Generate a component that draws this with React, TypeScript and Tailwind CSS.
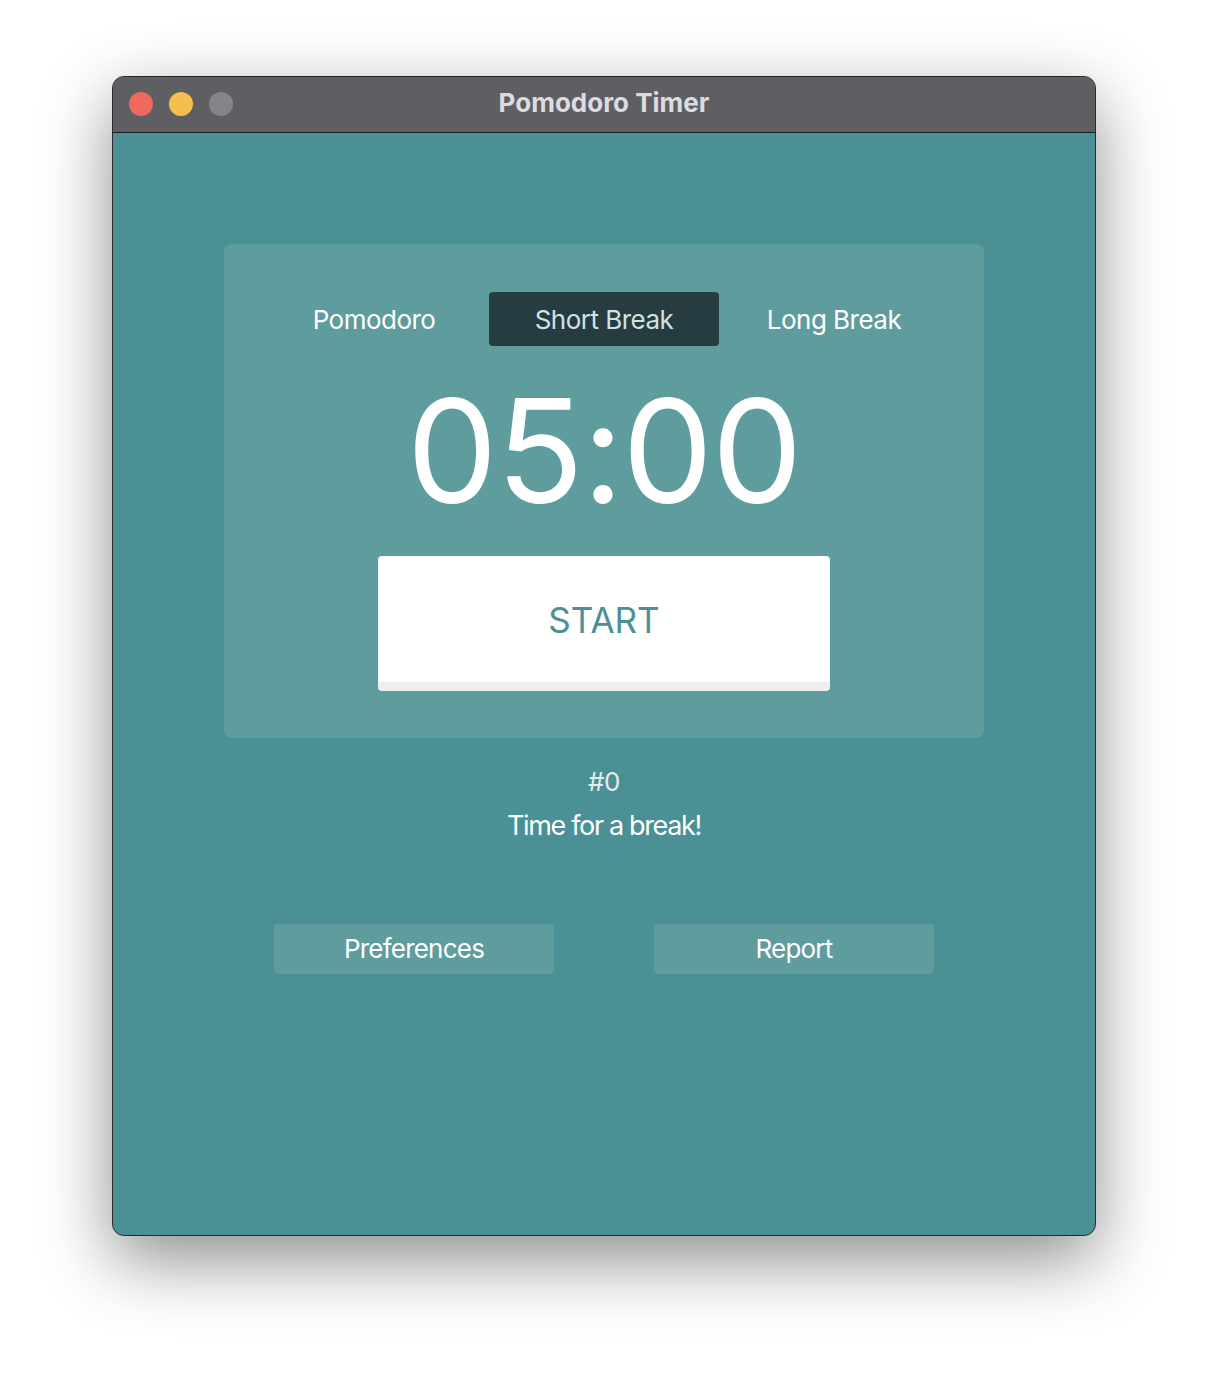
import { useState } from "react";

const tabs = ["Pomodoro", "Short Break", "Long Break"];

export default function App() {
  const [active, setActive] = useState(1);

  return (
    <div className="min-h-[1384px] w-full bg-white pt-[76px]" style={{ fontFamily: "Inter, 'Noto Sans', sans-serif" }}>
      <div className="mx-auto flex h-[1160px] w-[984px] flex-col overflow-hidden rounded-[12px] border border-[#2a2a2c] bg-[#4b9094] shadow-[0_24px_70px_rgba(0,0,0,0.45)]">
        {/* title bar */}
        <div className="relative flex h-[56px] shrink-0 items-center justify-center border-b border-[#1f1f21] bg-[#5f5e63]">
          <div className="absolute left-[16px] top-[15px] flex gap-[16px]">
            <span className="size-[24px] rounded-full bg-[#ee6a5e]" />
            <span className="size-[24px] rounded-full bg-[#f5bf4f]" />
            <span className="size-[24px] rounded-full bg-[#85848a]" />
          </div>
          <span className="pb-[4px] text-[26px] font-bold text-[#dcdce0]">Pomodoro Timer</span>
        </div>

        {/* content */}
        <div className="flex flex-col items-center pt-[111px]">
          <div className="flex w-[760px] flex-col items-center rounded-[8px] bg-[#5f9c9e] pb-[47px] pt-[48px]">
            <div className="flex">
              {tabs.map((t, i) => (
                <button
                  key={t}
                  onClick={() => setActive(i)}
                  className={`h-[54px] w-[230px] rounded-[4px] text-[26px] tracking-[-0.02em] ${
                    i === active ? "bg-[#263c40] text-[#cfe3e3]" : "text-white"
                  }`}
                >
                  {t}
                </button>
              ))}
            </div>

            <div className="flex h-[210px] items-center justify-center text-[144px] leading-none font-normal tracking-[-0.01em] text-white">
              05:00
            </div>

            <button className="h-[135px] w-[452px] rounded-[4px] border-b-[9px] border-[#efefef] bg-white pt-[2px] text-[35px] font-normal text-[#4b9094]">
              START
            </button>
          </div>

          <div className="mt-[28px] text-[26px] leading-[32px] tracking-[-0.02em] text-[#e2eeee]">#0</div>
          <div className="mt-[12px] text-[27px] leading-[32px] tracking-[-0.05em] text-white">Time for a break!</div>

          <div className="mt-[82px] flex gap-[100px]">
            <button className="h-[50px] w-[280px] rounded-[4px] bg-[#5f9c9e] pb-[2px] text-[26px] tracking-[-0.03em] text-white">
              Preferences
            </button>
            <button className="h-[50px] w-[280px] rounded-[4px] bg-[#5f9c9e] pb-[2px] text-[26px] tracking-[-0.03em] text-white">
              Report
            </button>
          </div>
        </div>
      </div>
    </div>
  );
}
